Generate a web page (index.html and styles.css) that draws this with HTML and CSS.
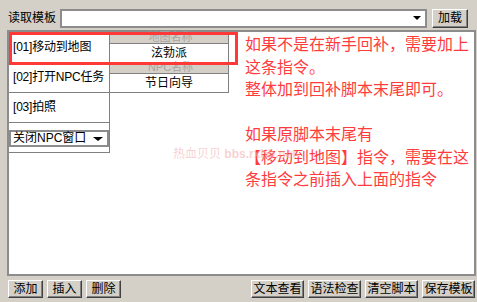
FILE: index.html
```html
<!DOCTYPE html>
<html lang="zh-CN">
<head>
    <meta charset="UTF-8">
    <title>脚本模板</title>
    <link rel="stylesheet" href="styles.css">
</head>
<body>
    <div class="toolbar">
        <span class="toolbar-label">读取模板</span>
        <div class="combo"><span class="arrow"></span></div>
        <button class="btn btn-load">加载</button>
    </div>

    <div class="panel">
        <div class="steps">
            <div class="step">
                <div class="step-name">[01]移动到地图</div>
                <div class="step-params">
                    <div class="param-label">地图名称</div>
                    <div class="param-value">泫勃派</div>
                </div>
            </div>
            <div class="step">
                <div class="step-name">[02]打开NPC任务</div>
                <div class="step-params">
                    <div class="param-label">NPC名称</div>
                    <div class="param-value">节日向导</div>
                </div>
            </div>
            <div class="step">
                <div class="step-name">[03]拍照</div>
            </div>
            <div class="step">
                <div class="step-name step-pick">
                    <div class="select">关闭NPC窗口<span class="arrow arrow-wide"></span></div>
                </div>
            </div>
        </div>

        <div class="note">如果不是在新手回补，需要加上<br>这条指令。<br>整体加到回补脚本末尾即可。<br><br>如果原脚本末尾有<br>【移动到地图】指令，需要在这<br>条指令之前插入上面的指令</div>

        <!-- annotation overlays -->
        <div class="highlight"></div>
        <div class="watermark">热血贝贝 <b>bbs.rxbb.net</b></div>
    </div>

    <div class="actions">
        <div class="action-group">
            <button class="btn btn-short">添加</button>
            <button class="btn btn-short">插入</button>
            <button class="btn btn-short">删除</button>
        </div>
        <div class="action-group">
            <button class="btn btn-long">文本查看</button>
            <button class="btn btn-long">语法检查</button>
            <button class="btn btn-long">清空脚本</button>
            <button class="btn btn-long">保存模板</button>
        </div>
    </div>
</body>
</html>
```

FILE: styles.css
```css
:root {
    --face: #d4d0c8;
    --shadow: #808080;
    --dark: #404040;
    --note: #ff3c3c;
}

* {
    box-sizing: border-box;
    margin: 0;
    padding: 0;
}

body {
    font-family: 'Liberation Sans', 'Noto Sans CJK SC', sans-serif;
    font-size: 12px;
    color: #000;
    background: var(--face);
    width: 477px;
    height: 302px;
    overflow: hidden;
}

.toolbar {
    display: flex;
    align-items: center;
    height: 30px;
    padding: 8px 9px 2px 8px;
}

.toolbar-label {
    width: 52px;
    line-height: 18px;
}

.combo {
    flex: 1;
    height: 19px;
    margin-right: 5px;
    background: #fff;
    border: 2px solid #8c8c8c;
    display: flex;
    align-items: center;
    justify-content: flex-end;
    padding-right: 4px;
}

.arrow {
    width: 0;
    height: 0;
    border-left: 4px solid transparent;
    border-right: 4px solid transparent;
    border-top: 4px solid #000;
}

.arrow-wide {
    border-left-width: 5px;
    border-right-width: 5px;
}

.btn {
    font-family: 'Liberation Sans', 'Noto Sans CJK SC', sans-serif;
    font-size: 12px;
    color: #000;
    background: var(--face);
    border: 1px solid;
    border-color: #fff var(--dark) var(--dark) #fff;
    box-shadow: inset -1px -1px 0 var(--shadow);
    height: 18px;
    line-height: 15px;
    padding: 0;
}

.btn-load {
    width: 36px;
    height: 19px;
}

.btn-short {
    width: 35px;
}

.btn-long {
    width: 53px;
}

.panel {
    position: relative;
    display: flex;
    height: 246px;
    margin: 0 1px 0 7px;
    background: #fff;
    border: 2px solid #8c8c8c;
}

.steps {
    width: 220px;
    padding-top: 1px;
}

.step {
    display: flex;
}

.step-name {
    width: 101px;
    height: 30px;
    line-height: 29px;
    padding-left: 4px;
    border-right: 1px solid var(--shadow);
    border-bottom: 1px solid var(--shadow);
    white-space: nowrap;
    letter-spacing: -0.2px;
}

.step-pick {
    padding: 7px 0 0 0;
    letter-spacing: 0;
}

.select {
    display: flex;
    align-items: center;
    justify-content: space-between;
    height: 17px;
    line-height: 13px;
    padding: 0 4px 0 2px;
    border: 2px solid #8c8c8c;
}

.step-params {
    width: 119px;
    border-right: 1px solid var(--shadow);
}

.param-label {
    height: 10px;
    line-height: 9px;
    font-size: 11px;
    text-align: center;
    color: #a8a4a0;
    background: var(--face);
    padding-left: 3px;
}

.param-value {
    height: 20px;
    line-height: 18px;
    text-align: center;
    border-top: 1px solid var(--shadow);
    border-bottom: 1px solid var(--shadow);
}

.note {
    margin-left: 16px;
    font-family: 'Noto Sans CJK SC', sans-serif;
    font-size: 16px;
    line-height: 22.5px;
    color: var(--note);
    white-space: nowrap;
}

.highlight {
    position: absolute;
    left: 0;
    top: 0;
    width: 229px;
    height: 33px;
    border: 3px solid #ff3838;
}

.watermark {
    position: absolute;
    left: 164px;
    top: 112px;
    font-size: 12px;
    color: rgba(240, 170, 170, 0.55);
    white-space: nowrap;
}

.actions {
    display: flex;
    justify-content: space-between;
    margin-top: 4px;
    padding: 0 2px 0 8px;
}

.action-group {
    display: flex;
    gap: 4px;
}
```
